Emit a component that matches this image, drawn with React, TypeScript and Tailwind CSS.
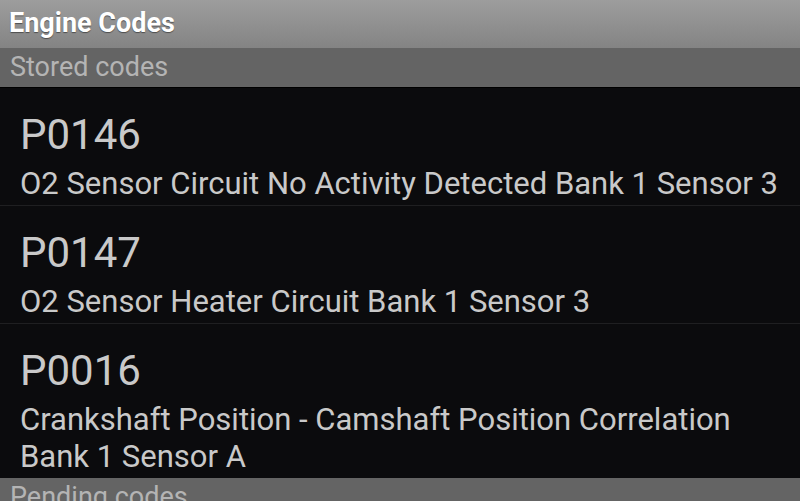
import React from "react";

type Code = { id: string; text: string };

const stored: Code[] = [
  { id: "P0146", text: "O2 Sensor Circuit No Activity Detected Bank 1 Sensor 3" },
  { id: "P0147", text: "O2 Sensor Heater Circuit Bank 1 Sensor 3" },
  { id: "P0016", text: "Crankshaft Position - Camshaft Position Correlation Bank 1 Sensor A" },
];

function SectionHeader({ label }: { label: string }) {
  return (
    <div className="h-[39px] bg-[#646464] pl-[10px] text-[27px] leading-[39px] text-[#b4b4b4]">
      {label}
    </div>
  );
}

export default function App() {
  return (
    <div
      className="h-[501px] w-[800px] overflow-hidden bg-[#0b0b0d]"
      style={{ fontFamily: "Roboto, 'Noto Sans', sans-serif" }}
    >
      {/* Title bar */}
      <div className="h-[48px] bg-gradient-to-b from-[#9d9d9d] to-[#848484] pl-[9px] text-[27px] font-bold leading-[46px] text-white [text-shadow:0_1px_1px_rgba(0,0,0,0.45)]">
        Engine Codes
      </div>

      <SectionHeader label="Stored codes" />
      <div className="h-px bg-black" />

      <div>
        {stored.map((code, idx) => (
          <div key={code.id}>
            <div className="pb-[3px] pl-5 pr-3 pt-[23px]">
              <div className="text-[42px] leading-[48px] text-[#c9c9c9]">{code.id}</div>
              <div className="mt-[6px] text-[31px] leading-[37px] text-[#c9c9c9]">{code.text}</div>
            </div>
            {idx < stored.length - 1 && <div className="h-px bg-[#1f1f21]" />}
          </div>
        ))}
      </div>

      <SectionHeader label="Pending codes" />
    </div>
  );
}
